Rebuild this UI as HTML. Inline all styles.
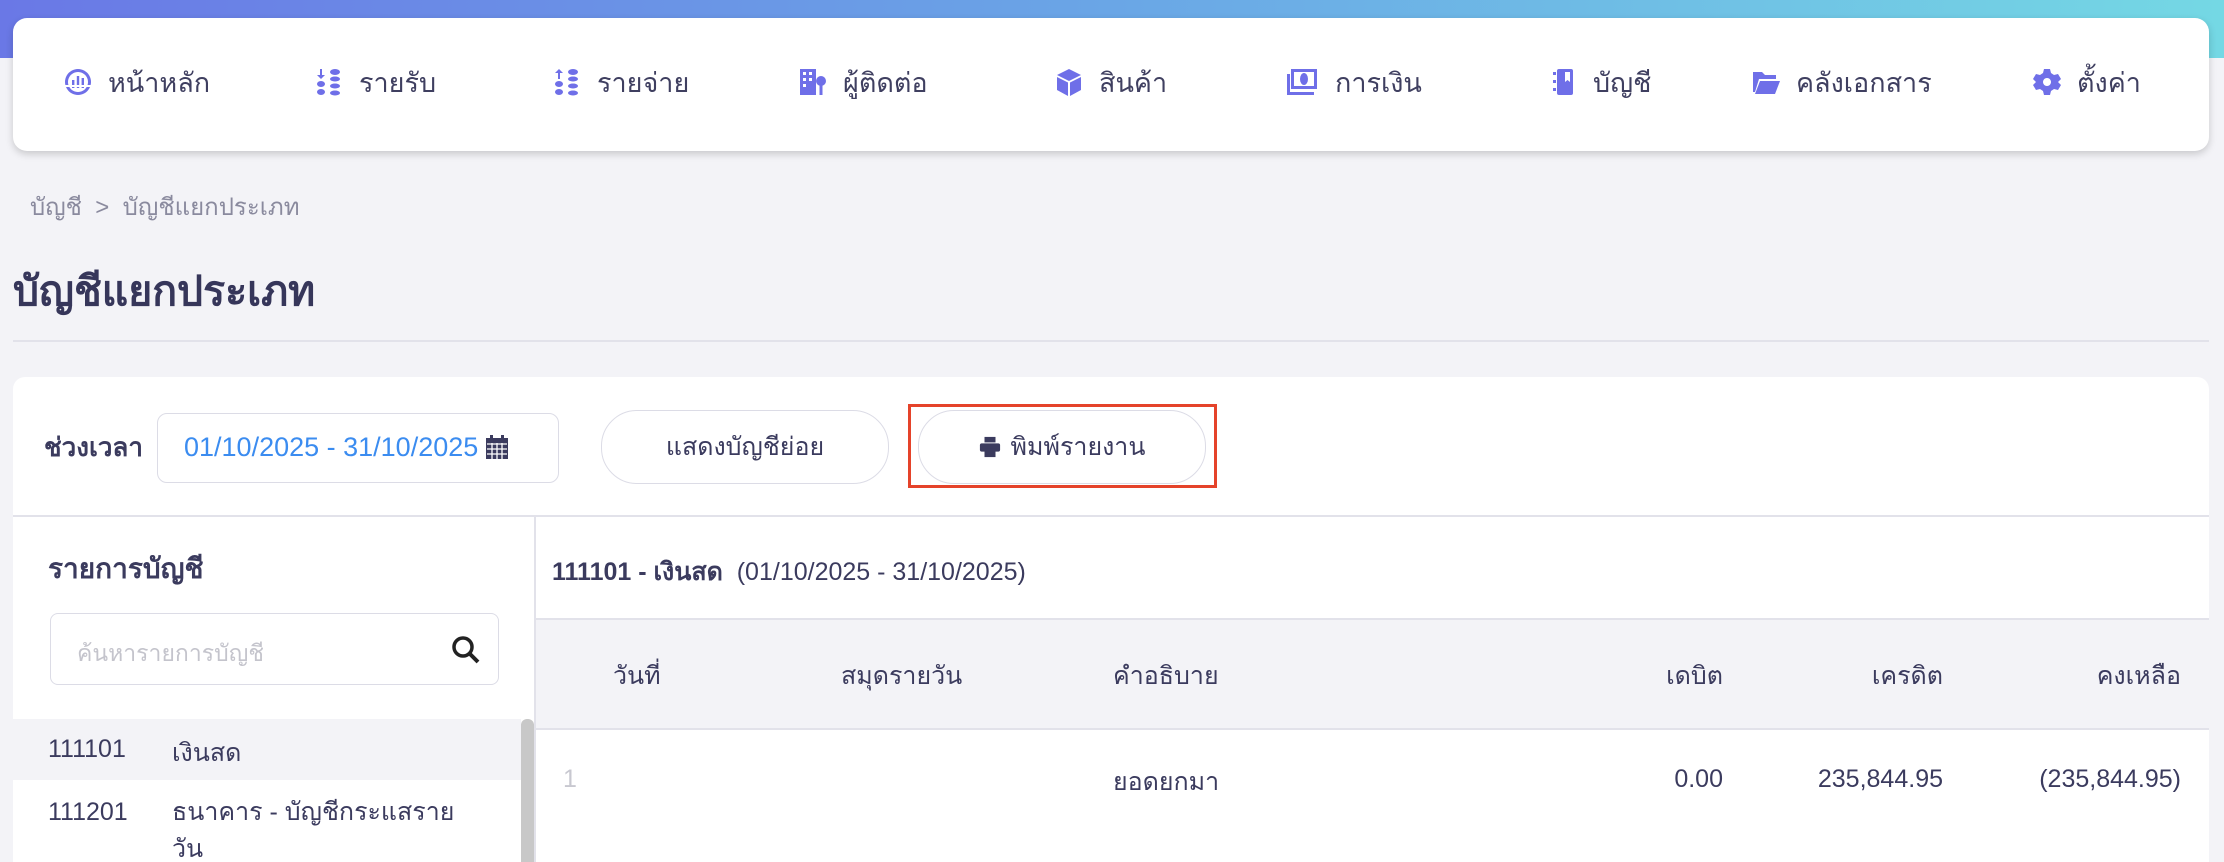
<!DOCTYPE html>
<html><head><meta charset="utf-8"><style>
*{box-sizing:border-box;margin:0;padding:0}
html{width:2224px;height:862px;overflow:hidden}
body{width:2224px;height:862px;overflow:hidden;background:#f3f3f7;font-family:"Liberation Sans","Noto Sans CJK SC",sans-serif;color:#3b3b5e;position:relative}
.abs{position:absolute;white-space:nowrap}
.top{position:absolute;left:0;top:0;width:2224px;height:58px;background:linear-gradient(90deg,#6a78e6,#6aa6e6 50%,#74d8e4)}
.nav{position:absolute;left:13px;top:18px;width:2196px;height:133px;background:#fff;border-radius:14px;box-shadow:0 3px 8px rgba(0,0,0,.18)}
.ni{position:absolute;top:49px;height:30px;display:flex;align-items:center;font-size:27px;color:#3f3f60}
.ni svg{width:28px;height:28px;margin-right:16px;fill:#6f6fe8}
.card{position:absolute;left:13px;top:377px;width:2196px;height:485px;background:#fff;border-radius:12px 12px 0 0;overflow:hidden}
.btn{position:absolute;border:1.5px solid #dcdce6;border-radius:36px;background:#fff;display:flex;align-items:center;justify-content:center;font-size:25px;color:#3b3b5e}
</style></head><body>
<div class="top"></div>
<div class="nav">
<div class="ni" style="left:51px"><svg viewBox="0 0 28 28"><path d="M14 1a13 13 0 1 0 .01 0zm0 3a10 10 0 1 1-.01 0z" fill-rule="evenodd"/><rect x="8" y="12" width="2.4" height="8"/><rect x="12.8" y="8" width="2.4" height="12"/><rect x="17.6" y="10" width="2.4" height="10"/><rect x="0" y="17" width="28" height="2" fill="#fff"/></svg>หน้าหลัก</div>
<div class="ni" style="left:302px"><svg viewBox="0 0 28 28"><path d="M5 1h2v6h3l-4 4-4-4h3z"/><ellipse cx="6" cy="16" rx="4" ry="3"/><ellipse cx="6" cy="24" rx="4" ry="3"/><ellipse cx="20" cy="4" rx="5" ry="3"/><ellipse cx="20" cy="11" rx="5" ry="2.5"/><ellipse cx="20" cy="18" rx="5" ry="2.5"/><ellipse cx="20" cy="25" rx="5" ry="2.5"/></svg>รายรับ</div>
<div class="ni" style="left:540px"><svg viewBox="0 0 28 28"><path d="M6 1l4 4H7v6H5V5H2z"/><ellipse cx="6" cy="16" rx="4" ry="3"/><ellipse cx="6" cy="24" rx="4" ry="3"/><ellipse cx="20" cy="4" rx="5" ry="3"/><ellipse cx="20" cy="11" rx="5" ry="2.5"/><ellipse cx="20" cy="18" rx="5" ry="2.5"/><ellipse cx="20" cy="25" rx="5" ry="2.5"/></svg>รายจ่าย</div>
<div class="ni" style="left:786px"><svg viewBox="0 0 28 28"><path d="M1 1h16v26H1zM4 4v3h3V4zm6 0v3h3V4zM4 10v3h3v-3zm6 0v3h3v-3zM4 16v3h3v-3z" fill-rule="evenodd"/><circle cx="22" cy="13" r="5"/><rect x="20.5" y="17" width="3" height="10"/></svg>ผู้ติดต่อ</div>
<div class="ni" style="left:1042px"><svg viewBox="0 0 28 28"><path d="M14 1l12 6-12 6L2 7z"/><path d="M2 9l11 5.5V28L2 22zM26 9l-11 5.5V28l11-6z"/></svg>สินค้า</div>
<div class="ni" style="left:1272px"><svg viewBox="0 0 32 28" style="width:34px"><path d="M5 1h26v20H5zm3 3v14h20V4z" fill-rule="evenodd"/><ellipse cx="18" cy="11" rx="4" ry="6"/><path d="M1 6h3v18h24v3H1z"/></svg>การเงิน</div>
<div class="ni" style="left:1536px"><svg viewBox="0 0 28 28"><rect x="8" y="1" width="16" height="26" rx="2"/><rect x="4" y="4" width="3" height="3"/><rect x="4" y="12" width="3" height="3"/><rect x="4" y="20" width="3" height="3"/><path d="M16 4h5v10l-2.5-2-2.5 2z" fill="#fff"/></svg>บัญชี</div>
<div class="ni" style="left:1739px"><svg viewBox="0 0 28 28"><path d="M1 4h9l3 3h11v4H7L3 24H1z"/><path d="M8 13h20l-5 13H3z"/></svg>คลังเอกสาร</div>
<div class="ni" style="left:2020px"><svg viewBox="0 0 28 28"><path d="M11 1h6l1 4 3 2 4-1 3 5-3 3v0l3 3-3 5-4-1-3 2-1 4h-6l-1-4-3-2-4 1-3-5 3-3-3-3 3-5 4 1 3-2zm3 9a4 4 0 1 0 .01 0z" fill-rule="evenodd"/></svg>ตั้งค่า</div>
</div>
<div class="abs" style="left:30px;top:187px;font-size:24px;color:#8a8a9e">บัญชี &nbsp;&gt;&nbsp; บัญชีแยกประเภท</div>
<div class="abs" style="left:13px;top:259px;font-size:41px;font-weight:bold;color:#36365a">บัญชีแยกประเภท</div>
<div class="abs" style="left:13px;top:340px;width:2196px;height:2px;background:#e2e2ea"></div>
<div class="card">
<div class="abs" style="left:31px;top:50px;font-size:26px;font-weight:bold">ช่วงเวลา</div>
<div class="abs" style="left:144px;top:36px;width:402px;height:70px;border:1.5px solid #dcdce6;border-radius:10px;font-size:27px;color:#3b8cf0;padding:18px 0 0 26px">01/10/2025 - 31/10/2025 <svg width="22" height="24" viewBox="0 0 22 24" style="vertical-align:-3px"><rect x="0" y="3" width="22" height="21" fill="#3b3b5e"/><path d="M1 9h20M1 14h20M1 19h20M6 8v16M11 8v16M16 8v16" stroke="#fff" stroke-width="1.3"/><rect x="4" y="0" width="3" height="5" fill="#3b3b5e"/><rect x="15" y="0" width="3" height="5" fill="#3b3b5e"/></svg></div>
<div class="btn" style="left:588px;top:33px;width:288px;height:74px">แสดงบัญชีย่อย</div>
<div class="abs" style="left:895px;top:27px;width:309px;height:84px;border:3.5px solid #e5432a"></div>
<div class="btn" style="left:905px;top:33px;width:288px;height:74px"><svg viewBox="0 0 24 24" width="22" height="24" style="margin-right:10px;fill:#3b3b5e"><rect x="6" y="1" width="12" height="6"/><rect x="1" y="8" width="22" height="9" rx="2"/><rect x="6" y="14" width="12" height="9"/></svg>พิมพ์รายงาน</div>
<div class="abs" style="left:0;top:138px;width:2196px;height:2px;background:#e2e2ea"></div>
<div class="abs" style="left:521px;top:140px;width:2px;height:400px;background:#e2e2ea"></div>
<div class="abs" style="left:35px;top:170px;font-size:28px;font-weight:bold">รายการบัญชี</div>
<div class="abs" style="left:37px;top:236px;width:449px;height:72px;border:1.5px solid #dcdce6;border-radius:8px;font-size:23px;color:#c4c4cc;padding:22px 0 0 26px">ค้นหารายการบัญชี</div>
<svg class="abs" style="left:438px;top:258px" width="30" height="30" viewBox="0 0 30 30"><circle cx="12" cy="12" r="9" fill="none" stroke="#222" stroke-width="3.5"/><path d="M18 18l9 9" stroke="#222" stroke-width="4"/></svg>
<div class="abs" style="left:0;top:342px;width:508px;height:61px;background:#f3f3f7"></div>
<div class="abs" style="left:35px;top:358px;font-size:25px">111101</div><div class="abs" style="left:159px;top:356px;font-size:25px">เงินสด</div>
<div class="abs" style="left:35px;top:421px;font-size:25px">111201</div><div class="abs" style="left:159px;top:417px;font-size:25px;line-height:37px">ธนาคาร - บัญชีกระแสราย<br>วัน</div>
<div class="abs" style="left:508px;top:342px;width:13px;height:200px;background:#c8c8c8;border-radius:6px"></div>
<div class="abs" style="left:539px;top:175px;font-size:25px"><b>111101 - เงินสด</b>&nbsp; (01/10/2025 - 31/10/2025)</div>
<div class="abs" style="left:523px;top:241px;width:1673px;height:112px;background:#f3f3f7;border-top:2px solid #e2e2ea;border-bottom:2px solid #e2e2ea"></div>
<div class="abs" style="left:600px;top:279px;font-size:25px">วันที่</div>
<div class="abs" style="left:828px;top:279px;font-size:25px">สมุดรายวัน</div>
<div class="abs" style="left:1100px;top:279px;font-size:25px">คำอธิบาย</div>
<div class="abs" style="right:486px;top:279px;font-size:25px">เดบิต</div>
<div class="abs" style="right:266px;top:279px;font-size:25px">เครดิต</div>
<div class="abs" style="right:28px;top:279px;font-size:25px">คงเหลือ</div>
<div class="abs" style="left:550px;top:388px;font-size:25px;color:#c8c8d0">1</div>
<div class="abs" style="left:1100px;top:385px;font-size:25px">ยอดยกมา</div>
<div class="abs" style="right:486px;top:388px;font-size:25px">0.00</div>
<div class="abs" style="right:266px;top:388px;font-size:25px">235,844.95</div>
<div class="abs" style="right:28px;top:388px;font-size:25px">(235,844.95)</div>
</div>
</body></html>
